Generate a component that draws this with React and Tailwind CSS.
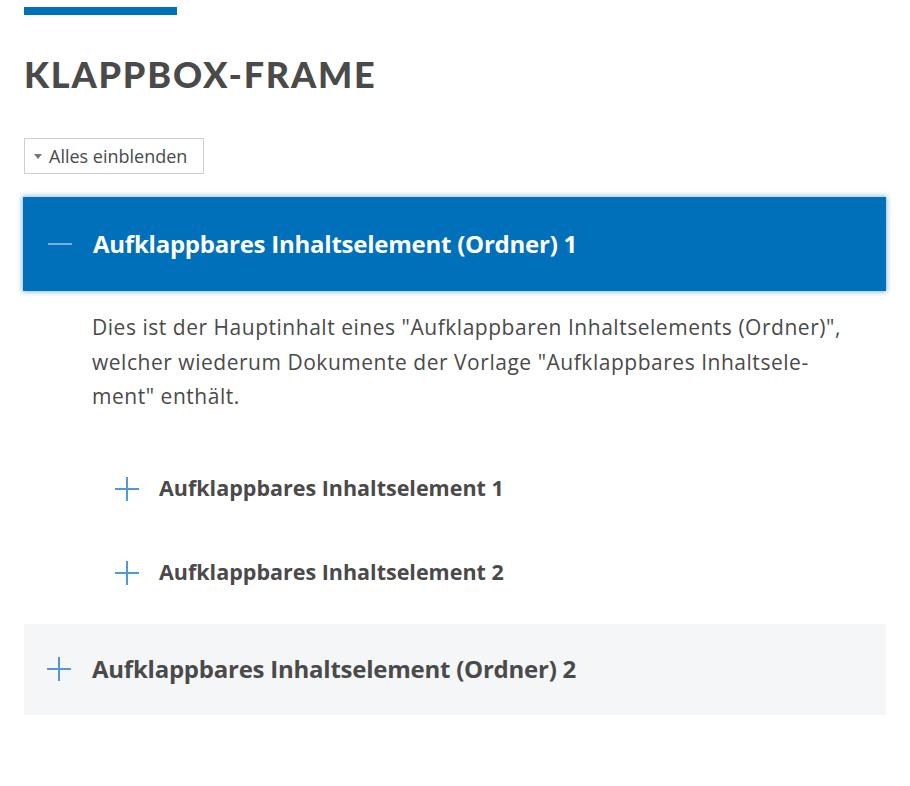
import { useState } from "react";

const text = "text-[#4a4a4a]";

function PlusIcon({ className = "" }) {
  return (
    <svg viewBox="0 0 26 26" className={className} aria-hidden="true">
      <path d="M13 1v24M1 13h24" stroke="currentColor" strokeWidth="2" fill="none" />
    </svg>
  );
}

function MinusIcon({ className = "" }) {
  return (
    <svg viewBox="0 0 26 26" className={className} aria-hidden="true">
      <path d="M1 13h24" stroke="currentColor" strokeWidth="1.5" fill="none" />
    </svg>
  );
}

export default function App() {
  const [open] = useState(true);

  return (
    <div className="min-h-[786px] bg-white px-6 pt-[7px] font-['Open_Sans',sans-serif]">
      <div className="h-2 w-[153px] bg-[#0070ba]" />

      <h1 className={`mt-[35px] font-['Lato',sans-serif] text-[36px] font-black uppercase leading-[48px] tracking-[0.05em] ${text}`}>
        Klappbox-Frame
      </h1>

      <button
        type="button"
        className={`mt-[40px] flex h-9 items-center gap-[7px] border border-[#cfcfcf] bg-white pl-[9px] pr-[16px] text-[18px] ${text}`}
      >
        <span className="h-0 w-0 border-x-[4px] border-t-[5px] border-x-transparent border-t-[#777]" />
        Alles einblenden
      </button>

      <div className="mt-[23px] -ml-px">
        <div className="flex h-[94px] items-center gap-5 bg-[#0070ba] pl-6 text-white shadow-[0_0_5px_1px_rgba(0,112,186,0.45)]">
          <MinusIcon className="h-[26px] w-[26px] text-[#9cc4e4]" />
          <span className="text-[24px] font-bold tracking-[-0.01em]">Aufklappbares Inhaltselement (Ordner) {open ? 1 : 1}</span>
        </div>
      </div>

      <div className="pl-[68px] pr-6">
        <p className={`mt-[19px] text-[21px] leading-[34.5px] tracking-[0.025em] ${text}`}>
          Dies ist der Hauptinhalt eines "Aufklappbaren Inhaltselements (Ordner)", welcher wiederum Dokumente der Vorlage "Aufklappbares Inhaltsele­ment" enthält.
        </p>

        <div className="mt-[62px] flex flex-col gap-[58px] pl-[22px]">
          {["Aufklappbares Inhaltselement 1", "Aufklappbares Inhaltselement 2"].map((t) => (
            <div key={t} className="flex h-[26px] items-center gap-[19px]">
              <PlusIcon className="h-[26px] w-[26px] text-[#4f9ad6]" />
              <span className={`text-[21.5px] font-bold ${text}`}>{t}</span>
            </div>
          ))}
        </div>
      </div>

      <div className="mt-[38px] flex h-[91px] items-center gap-5 bg-[#f5f6f8] pl-[22px]">
        <PlusIcon className="h-[26px] w-[26px] text-[#4f9ad6]" />
        <span className={`text-[24px] font-bold tracking-[-0.01em] ${text}`}>Aufklappbares Inhaltselement (Ordner) 2</span>
      </div>
    </div>
  );
}
